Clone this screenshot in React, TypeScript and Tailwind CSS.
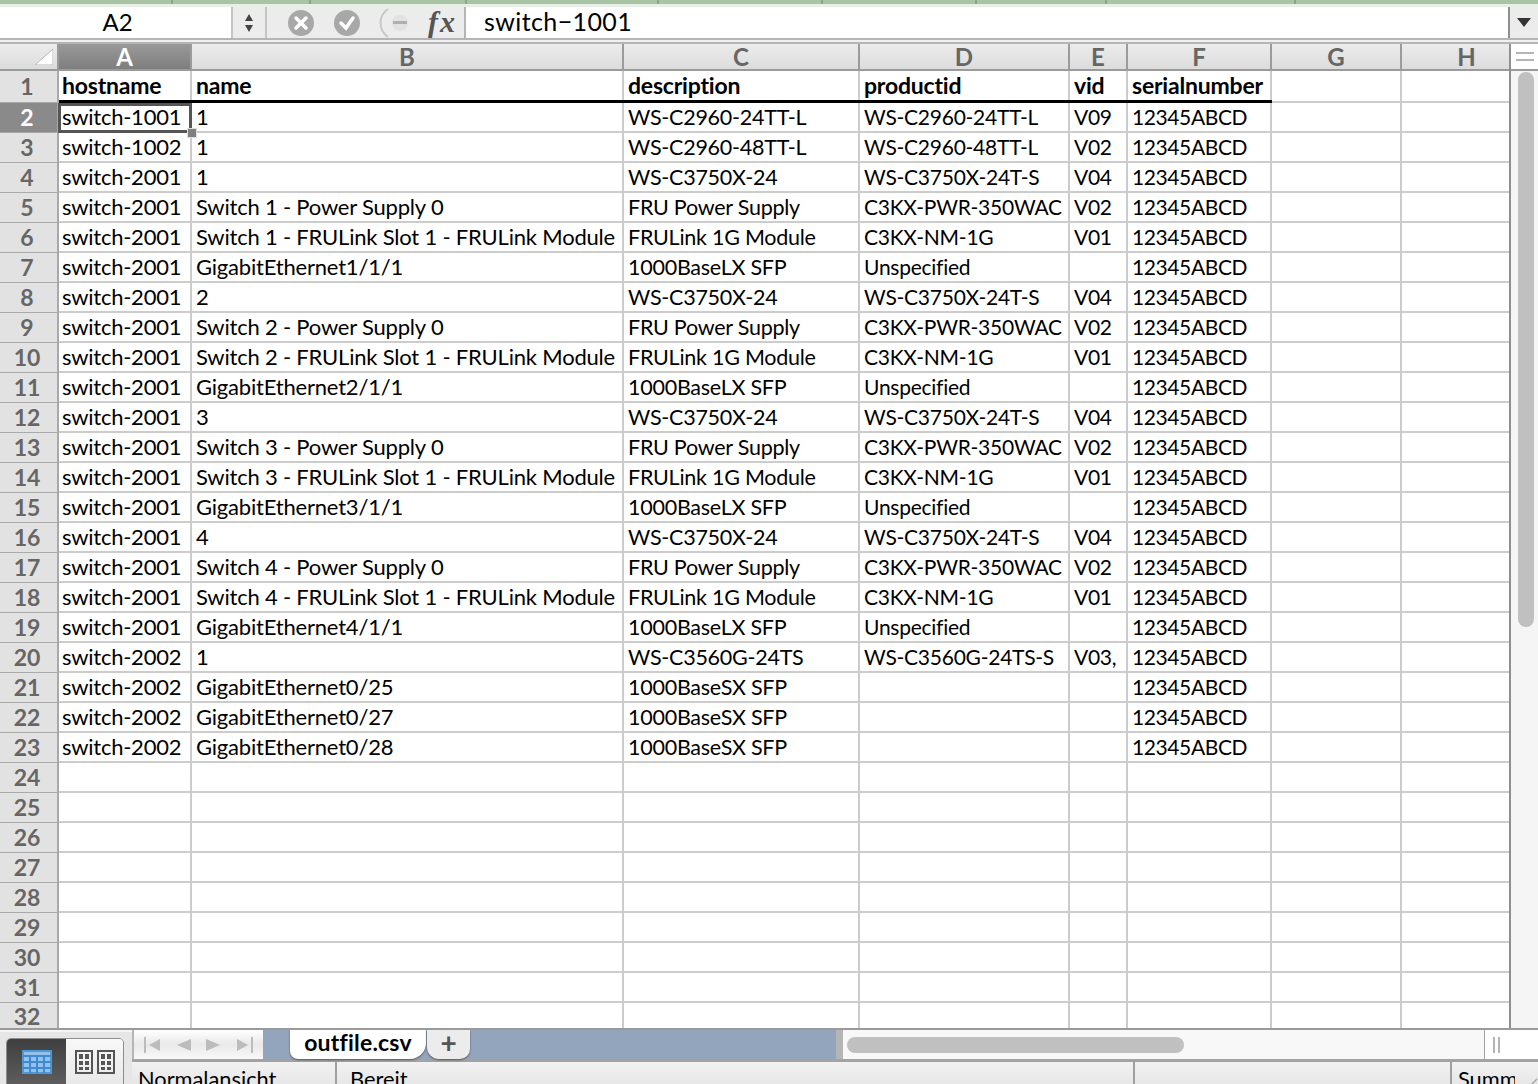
const cols = ['A', 'B', 'C', 'D', 'E', 'F', 'G', 'H'];

const gridCols = 'grid grid-cols-[59px_133px_432px_236px_210px_58px_144px_130px_107px]';

// the picture's font has narrower capitals and digits than Lato, so each column gets its own fit
const colText = [
  'text-[22px] leading-[28px] tracking-[-0.25px] pl-[3px]',
  'text-[22px] leading-[28px] tracking-[-0.2px] pl-[4px]',
  'text-[21.5px] leading-[29px] tracking-[-0.25px] pl-[4px]',
  'text-[21px] leading-[28px] tracking-[-0.25px] pl-[4px]',
  'text-[21px] leading-[28px] tracking-[-0.3px] pl-[4px]',
  'text-[21px] leading-[28px] tracking-[-0.4px] pl-[4px]',
];

const tabStops = ['w-[173px]', 'w-[138px]', 'w-[156px]', 'w-[192px]', 'w-[164px]', 'w-[154px]', 'w-[130px]', 'w-[189px]'];

const rows: string[][] = [
  ['switch-1001', '1', 'WS-C2960-24TT-L', 'WS-C2960-24TT-L', 'V09', '12345ABCD'],
  ['switch-1002', '1', 'WS-C2960-48TT-L', 'WS-C2960-48TT-L', 'V02', '12345ABCD'],
  ['switch-2001', '1', 'WS-C3750X-24', 'WS-C3750X-24T-S', 'V04', '12345ABCD'],
  ['switch-2001', 'Switch 1 - Power Supply 0', 'FRU Power Supply', 'C3KX-PWR-350WAC', 'V02', '12345ABCD'],
  ['switch-2001', 'Switch 1 - FRULink Slot 1 - FRULink Module', 'FRULink 1G Module', 'C3KX-NM-1G', 'V01', '12345ABCD'],
  ['switch-2001', 'GigabitEthernet1/1/1', '1000BaseLX SFP', 'Unspecified', '', '12345ABCD'],
  ['switch-2001', '2', 'WS-C3750X-24', 'WS-C3750X-24T-S', 'V04', '12345ABCD'],
  ['switch-2001', 'Switch 2 - Power Supply 0', 'FRU Power Supply', 'C3KX-PWR-350WAC', 'V02', '12345ABCD'],
  ['switch-2001', 'Switch 2 - FRULink Slot 1 - FRULink Module', 'FRULink 1G Module', 'C3KX-NM-1G', 'V01', '12345ABCD'],
  ['switch-2001', 'GigabitEthernet2/1/1', '1000BaseLX SFP', 'Unspecified', '', '12345ABCD'],
  ['switch-2001', '3', 'WS-C3750X-24', 'WS-C3750X-24T-S', 'V04', '12345ABCD'],
  ['switch-2001', 'Switch 3 - Power Supply 0', 'FRU Power Supply', 'C3KX-PWR-350WAC', 'V02', '12345ABCD'],
  ['switch-2001', 'Switch 3 - FRULink Slot 1 - FRULink Module', 'FRULink 1G Module', 'C3KX-NM-1G', 'V01', '12345ABCD'],
  ['switch-2001', 'GigabitEthernet3/1/1', '1000BaseLX SFP', 'Unspecified', '', '12345ABCD'],
  ['switch-2001', '4', 'WS-C3750X-24', 'WS-C3750X-24T-S', 'V04', '12345ABCD'],
  ['switch-2001', 'Switch 4 - Power Supply 0', 'FRU Power Supply', 'C3KX-PWR-350WAC', 'V02', '12345ABCD'],
  ['switch-2001', 'Switch 4 - FRULink Slot 1 - FRULink Module', 'FRULink 1G Module', 'C3KX-NM-1G', 'V01', '12345ABCD'],
  ['switch-2001', 'GigabitEthernet4/1/1', '1000BaseLX SFP', 'Unspecified', '', '12345ABCD'],
  ['switch-2002', '1', 'WS-C3560G-24TS', 'WS-C3560G-24TS-S', 'V03,', '12345ABCD'],
  ['switch-2002', 'GigabitEthernet0/25', '1000BaseSX SFP', '', '', '12345ABCD'],
  ['switch-2002', 'GigabitEthernet0/27', '1000BaseSX SFP', '', '', '12345ABCD'],
  ['switch-2002', 'GigabitEthernet0/28', '1000BaseSX SFP', '', '', '12345ABCD'],
];

const headers = ['hostname', 'name', 'description', 'productid', 'vid', 'serialnumber'];
const blanks = [24, 25, 26, 27, 28, 29, 30, 31];

function RowNum({ n, active }: { n: number; active?: boolean }) {
  return (
    <div
      className={`flex items-center justify-center border-b border-r-2 border-[#a9a9a9] pb-[1px] pr-[3px] text-[23px] font-bold leading-none ${
        active ? 'bg-[#8a8a8a] text-white' : 'bg-[#e2e2e2] text-[#666666]'
      }`}
    >
      {n}
    </div>
  );
}

function Cell({ children, fit }: { children?: string; fit?: string }) {
  return (
    <div className={`overflow-hidden whitespace-nowrap border-b-2 border-r-2 border-[#cccccc] text-black ${fit ?? ''}`}>
      {children}
    </div>
  );
}

function BlankCells() {
  return (
    <>
      <Cell />
      <Cell />
      <Cell />
      <Cell />
      <Cell />
      <Cell />
      <Cell />
      <div className="border-b-2 border-[#cccccc]" />
    </>
  );
}

function FormulaBar() {
  return (
    <div className="flex h-[31px] shrink-0 items-stretch bg-[#ececec]">
      <div className="flex w-[231px] items-center justify-center bg-white pb-[2px] pl-[4px] text-[24px] text-black">A2</div>
      <div className="flex w-[36px] items-center justify-center border-x-2 border-[#c4c4c4]">
        <svg width="10" height="24" viewBox="0 0 10 24">
          <path d="M5 3 9 10H1Z" fill="#444444" />
          <path d="M5 21 9 14H1Z" fill="#444444" />
        </svg>
      </div>
      <div className="flex w-[199px] items-center border-r-2 border-[#b5b5b5] pl-[21px]">
        <svg width="26" height="26" viewBox="0 0 26 26">
          <circle cx="13" cy="13" r="13" fill="#a8a8a8" />
          <path d="M8 8 18 18M18 8 8 18" stroke="#ffffff" strokeWidth="3.5" strokeLinecap="round" />
        </svg>
        <svg className="ml-[20px]" width="26" height="26" viewBox="0 0 26 26">
          <circle cx="13" cy="13" r="13" fill="#a8a8a8" />
          <path d="M7 13 12 18 19 8" stroke="#ffffff" strokeWidth="3.5" fill="none" strokeLinecap="round" />
        </svg>
        <svg className="ml-[18px]" width="30" height="30" viewBox="0 0 30 30">
          <path d="M10 1C0 8 0 22 10 29" stroke="#c8c8c8" strokeWidth="2" fill="none" />
          <circle cx="22" cy="15" r="8" fill="#e2e2e2" />
          <path d="M15 13H29V16H15Z" fill="#b0b0b0" />
        </svg>
        <span className="ml-[20px] pb-[2px] font-['Liberation_Serif',serif] text-[30px] font-bold italic leading-none tracking-[2px] text-[#555555]">fx</span>
      </div>
      <div className="flex min-w-0 flex-1 items-center bg-white pb-[2px] pl-[18px] text-[25px] tracking-[0.4px] text-black">switch−1001</div>
      <div className="flex w-[30px] items-center justify-center border-l-2 border-[#8f8f8f]">
        <svg width="14" height="9" viewBox="0 0 14 9">
          <path d="M0 0H14L7 9Z" fill="#333333" />
        </svg>
      </div>
    </div>
  );
}

function Grid() {
  return (
    <div className="flex min-w-0 flex-1 flex-col">
      <div className={`${gridCols} h-[27px] shrink-0 border-b-2 border-[#9b9b9b] bg-[linear-gradient(#ececec,#dcdcdc)]`}>
        <div className="flex items-end justify-end border-r-2 border-[#9b9b9b] pb-[4px] pr-[4px]">
          <svg width="18" height="16" viewBox="0 0 18 16">
            <path d="M18 0V16H0Z" fill="#ffffff" stroke="#b5b5b5" />
          </svg>
        </div>
        {cols.map((c) => (
          <div
            key={c}
            className={`flex items-center justify-center text-[24px] font-bold leading-none ${
              c === 'H' ? 'pl-[22px]' : 'border-r-2 border-[#9b9b9b]'
            } ${c === 'A' ? 'bg-[linear-gradient(#9a9a9a,#7e7e7e)] text-white' : 'text-[#666666]'}`}
          >
            {c}
          </div>
        ))}
      </div>

      <div className={`${gridCols} h-[32px] shrink-0`}>
        <RowNum n={1} />
        {headers.map((h, i) => (
          <div key={h} className="border-b-[3px] border-black">
            <div
              className={`h-full overflow-hidden whitespace-nowrap border-r-2 border-[#cccccc] text-[23px] font-bold leading-[29px] tracking-[-0.2px] text-black ${
                i === 0 ? 'pl-[3px]' : 'pl-[4px]'
              }`}
            >
              {h}
            </div>
          </div>
        ))}
        <div className="border-b-2 border-r-2 border-[#cccccc]" />
        <div className="border-b-2 border-[#cccccc]" />
      </div>

      {rows.map((r, i) => (
        <div key={i} className={`${gridCols} h-[30px] shrink-0`}>
          <RowNum n={i + 2} active={i === 0} />
          {r.map((v, j) =>
            i === 0 && j === 0 ? (
              <div key={j} className="relative">
                <div className="-ml-px h-full overflow-hidden whitespace-nowrap border-[3px] border-[#555555] pl-[1px] text-[22px] leading-[22px] tracking-[-0.25px] text-black">
                  {v}
                </div>
                <div className="absolute -bottom-[5px] -right-[5px] z-10 h-[10px] w-[10px] border border-[#dddddd] bg-[#808080]" />
              </div>
            ) : (
              <Cell key={j} fit={colText[j]}>
                {v}
              </Cell>
            )
          )}
          <Cell />
          <div className="border-b-2 border-[#cccccc]" />
        </div>
      ))}

      {blanks.map((n) => (
        <div key={n} className={`${gridCols} h-[30px] shrink-0`}>
          <RowNum n={n} />
          <BlankCells />
        </div>
      ))}

      <div className={`${gridCols} h-[25px] shrink-0 overflow-hidden`}>
        <div className="flex items-center justify-center border-r-2 border-[#a9a9a9] bg-[#e2e2e2] pr-[3px] pt-[1px] text-[23px] font-bold leading-none text-[#666666]">32</div>
        <div className="border-r-2 border-[#cccccc]" />
        <div className="border-r-2 border-[#cccccc]" />
        <div className="border-r-2 border-[#cccccc]" />
        <div className="border-r-2 border-[#cccccc]" />
        <div className="border-r-2 border-[#cccccc]" />
        <div className="border-r-2 border-[#cccccc]" />
        <div className="border-r-2 border-[#cccccc]" />
        <div />
      </div>
    </div>
  );
}

function Scrollbar() {
  return (
    <div className="flex w-[29px] flex-col border-l-2 border-[#8f8f8f] bg-[#f5f5f5]">
      <div className="flex h-[27px] flex-col items-center justify-center gap-[5px] border-b-2 border-[#9b9b9b] bg-white">
        <div className="h-[2px] w-[18px] bg-[#b5b5b5]" />
        <div className="h-[2px] w-[18px] bg-[#b5b5b5]" />
      </div>
      <div className="ml-[7px] mt-[1px] h-[555px] w-[16px] rounded-full bg-[#c0c0c0]" />
    </div>
  );
}

function SheetIcon() {
  return (
    <svg width="18" height="24" viewBox="0 0 18 24">
      <rect x="1" y="1" width="16" height="22" fill="none" stroke="#555555" strokeWidth="2" />
      <path d="M4 4H8V9H4ZM10 4H14V9H10ZM4 11H8V15H4ZM10 11H14V15H10ZM4 17H8V20H4ZM10 17H14V20H10Z" fill="#555555" />
    </svg>
  );
}

function BottomBar() {
  return (
    <div className="flex h-[54px] overflow-hidden bg-[#e6e6e6]">
      <div className="flex w-[132px] items-start border-t-2 border-[#f5f5f5] pl-[6px] pt-[6px]">
        <div className="flex h-[60px] w-[118px] overflow-hidden rounded-[5px] border border-[#8c8c8c]">
          <div className="flex w-[59px] justify-center bg-[linear-gradient(#3f3f3f,#666666)] pt-[11px]">
            <svg width="30" height="24" viewBox="0 0 30 24">
              <rect x="1" y="1" width="28" height="22" fill="#93c3ec" stroke="#4f98d8" strokeWidth="2" />
              <path d="M1 6H29M1 12H29M1 18H29M8 6V23M15 6V23M22 6V23" stroke="#3f8ad0" strokeWidth="2" />
            </svg>
          </div>
          <div className="flex flex-1 justify-center gap-[4px] bg-[linear-gradient(#f8f8f8,#e4e4e4)] pt-[11px]">
            <SheetIcon />
            <SheetIcon />
          </div>
        </div>
      </div>
      <div className="flex min-w-0 flex-1 flex-col">
        <div className="flex h-[32px] shrink-0 border-b-[3px] border-[#a3a3a3] bg-[#93a5bc]">
          <div className="flex w-[131px] items-center justify-center gap-[15px] border-l-2 border-[#b5b5b5] bg-[linear-gradient(#ffffff,#e9e9e9,#f8f8f8)]">
            <svg width="18" height="16" viewBox="0 0 18 16">
              <path d="M1 0H3V16H1ZM17 2V14L6 8Z" fill="#bcbcbc" />
            </svg>
            <svg width="15" height="16" viewBox="0 0 15 16">
              <path d="M15 2V14L1 8Z" fill="#bcbcbc" />
            </svg>
            <svg width="15" height="16" viewBox="0 0 15 16">
              <path d="M0 2V14L14 8Z" fill="#bcbcbc" />
            </svg>
            <svg width="18" height="16" viewBox="0 0 18 16">
              <path d="M15 0H17V16H15ZM1 2V14L12 8Z" fill="#bcbcbc" />
            </svg>
          </div>
          <div className="ml-[27px] flex h-[29px] w-[136px] items-center justify-center rounded-bl-[8px] rounded-br-[16px] bg-white pb-[5px] text-[23px] font-bold leading-none tracking-[0.2px] text-black shadow-[0_1px_2px_#555555]">
            outfile.csv
          </div>
          <div className="ml-[1px] flex h-[29px] w-[43px] items-center justify-center rounded-bl-[12px] rounded-br-[10px] bg-[#ececec] pb-[5px] text-[28px] font-bold leading-none text-[#555555] shadow-[0_1px_2px_#555555]">
            +
          </div>
          <div className="min-w-0 flex-1" />
          <div className="w-[7px] bg-[#b5b5b5]" />
          <div className="flex w-[641px] items-center bg-[#f8f8f8] pl-[4px]">
            <div className="h-[16px] w-[337px] rounded-full bg-[#c0c0c0]" />
          </div>
          <div className="flex w-[24px] items-center justify-center gap-[3px] border-l border-[#a3a3a3] bg-white">
            <div className="h-[16px] w-[2px] bg-[#b5b5b5]" />
            <div className="h-[16px] w-[2px] bg-[#b5b5b5]" />
          </div>
          <div className="w-[30px] bg-white" />
        </div>
        <div className="flex flex-1 bg-[linear-gradient(#f2f2f2,#e4e4e4)] text-[21.8px] leading-none text-black">
          <div className="w-[205px] border-r-2 border-[#9f9f9f] pl-[6px] pt-[6px]">Normalansicht</div>
          <div className="w-[798px] border-r-2 border-[#9f9f9f] pl-[13px] pt-[6px]">Bereit</div>
          <div className="w-[317px] border-r-2 border-[#9f9f9f]" />
          <div className="relative min-w-0 flex-1 pl-[6px] pt-[6px]">
            <div className="w-[57px] overflow-hidden whitespace-nowrap">Summ</div>
            <svg className="absolute bottom-0 right-0" width="14" height="14" viewBox="0 0 14 14">
              <path d="M13 3 3 13M13 8 8 13" stroke="#a8a8a8" strokeWidth="1.5" />
            </svg>
          </div>
        </div>
      </div>
    </div>
  );
}

export default function App() {
  return (
    <div className="flex h-[1084px] w-[1538px] flex-col overflow-hidden bg-white font-['Lato','Carlito',sans-serif]">
      <div className="flex h-[4px] shrink-0 bg-[#a9c4a5]">
        {tabStops.map((w) => (
          <div key={w} className={`${w} border-r-2 border-[#8aa686]`} />
        ))}
      </div>
      <div className="h-[3px] shrink-0 bg-[#e8efe6]" />
      <FormulaBar />
      <div className="h-[6px] shrink-0 border-y-2 border-[#b5b5b5] bg-[#f0f0f0]" />
      <div className="flex h-[986px] shrink-0 border-b-2 border-[#9a9a9a]">
        <Grid />
        <Scrollbar />
      </div>
      <BottomBar />
    </div>
  );
}
